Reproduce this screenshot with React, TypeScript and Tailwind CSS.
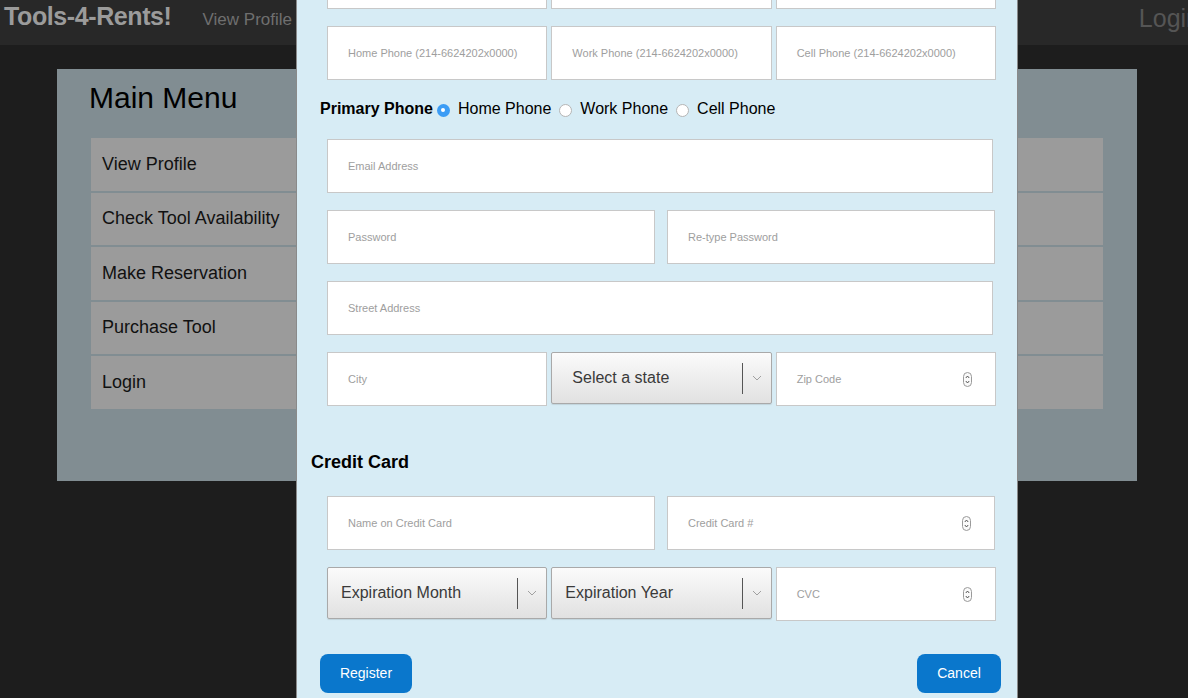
import React from "react";

const menuItems = [
  "View Profile",
  "Check Tool Availability",
  "Make Reservation",
  "Purchase Tool",
  "Login",
];

const Spinner = () => (
  <svg width="9" height="15" viewBox="0 0 9 15" className="shrink-0">
    <rect x="0.5" y="0.5" width="8" height="14" rx="4" fill="#fafafa" stroke="#9a9a9a" />
    <path d="M2.8 6 L4.5 4 L6.2 6" fill="none" stroke="#444" strokeWidth="0.9" />
    <path d="M2.8 9 L4.5 11 L6.2 9" fill="none" stroke="#444" strokeWidth="0.9" />
  </svg>
);

const Field = ({
  placeholder = "",
  number = false,
  className = "",
}: {
  placeholder?: string;
  number?: boolean;
  className?: string;
}) => (
  <div
    className={`flex h-[54px] items-center justify-between border border-[#c8c8c8] bg-white pl-5 pr-[23px] text-[11px] text-[#9e9e9e] ${className}`}
  >
    <span>{placeholder}</span>
    {number && <Spinner />}
  </div>
);

const SelectBox = ({ label, pad = "pl-[13px]" }: { label: string; pad?: string }) => (
  <div
    className={`flex h-[52px] items-center rounded-[2px] border border-[#a9a9a9] bg-gradient-to-b from-[#fbfbfb] to-[#e1e1e1] text-[16px] text-[#3a3a3a] shadow-[0_1px_1px_rgba(0,0,0,0.1)] ${pad}`}
  >
    <span className="flex-1">{label}</span>
    <div className="h-[31px] w-px bg-[#555]" />
    <svg width="28" height="10" viewBox="0 0 28 10">
      <path d="M10 3 L14 7 L18 3" fill="none" stroke="#a0a0a0" strokeWidth="1" />
    </svg>
  </div>
);

const Radio = ({ checked = false }: { checked?: boolean }) =>
  checked ? (
    <span className="flex h-[13px] w-[13px] items-center justify-center rounded-full bg-[#3b9cf5]">
      <span className="block h-[4px] w-[4px] rounded-full bg-white" />
    </span>
  ) : (
    <span className="block h-[13px] w-[13px] rounded-full border border-[#b5b5b5] bg-white" />
  );

const PrimaryButton = ({ label, className = "" }: { label: string; className?: string }) => (
  <button
    className={`h-[39px] rounded-[8px] bg-[#0a77cc] text-[14px] text-white ${className}`}
  >
    {label}
  </button>
);

export default function App() {
  return (
    <div
      className="relative h-[698px] w-[1188px] overflow-hidden bg-[#1d1d1d]"
      style={{ fontFamily: '"Liberation Sans", Arial, sans-serif' }}
    >
      {/* Nav bar */}
      <header className="flex h-[45px] items-start bg-[#282828] pl-[4px]">
        <span className="mt-[2px] text-[25px] font-bold leading-[29px] tracking-[-0.4px] text-[#9b9b9b]">
          Tools-4-Rents!
        </span>
        <span className="ml-[31px] mt-[10px] text-[17px] leading-[20px] text-[#6f6f6f]">View Profile</span>
        <span className="ml-auto mr-[-12px] mt-[4px] text-[25px] leading-[29px] text-[#555]">Login</span>
      </header>

      {/* Main menu panel */}
      <main className="ml-[57px] mt-[24px] h-[412px] w-[1080px] bg-[#818d92] px-[34px] pt-[12px]">
        <h1 className="ml-[-2px] text-[30px] leading-[34px] text-black">Main Menu</h1>
        <ul className="mt-[23px] flex flex-col gap-[2px]">
          {menuItems.map((item) => (
            <li
              key={item}
              className="flex h-[52.5px] items-center bg-[#9b9b9b] pl-[11px] text-[18px] text-[#111]"
            >
              {item}
            </li>
          ))}
        </ul>
      </main>

      {/* Register modal */}
      <div className="absolute left-[296px] top-0 h-[698px] w-[722px] border-x border-[#8a8a8a] bg-[#d7ecf5]">
        <div className="flex flex-col pl-[30px] pr-[21px]">
          <div className="mt-[-45px] grid grid-cols-3 gap-[4px]">
            <Field />
            <Field />
            <Field />
          </div>
          <div className="mt-[17px] grid grid-cols-3 gap-[4px]">
            <Field placeholder="Home Phone (214-6624202x0000)" />
            <Field placeholder="Work Phone (214-6624202x0000)" />
            <Field placeholder="Cell Phone (214-6624202x0000)" />
          </div>

          <div className="ml-[-7px] mt-[18px] flex h-[22px] items-center text-[16px] text-black">
            <span className="font-bold">Primary Phone</span>
            <span className="ml-[4px] mt-[2px]"><Radio checked /></span>
            <span className="ml-[8px]">Home Phone</span>
            <span className="ml-[8px] mt-[2px]"><Radio /></span>
            <span className="ml-[8px]">Work Phone</span>
            <span className="ml-[8px] mt-[2px]"><Radio /></span>
            <span className="ml-[8px]">Cell Phone</span>
          </div>

          <Field placeholder="Email Address" className="mr-[3px] mt-[19px]" />
          <div className="mr-[1px] mt-[17px] grid grid-cols-2 gap-[12px]">
            <Field placeholder="Password" />
            <Field placeholder="Re-type Password" />
          </div>
          <Field placeholder="Street Address" className="mr-[3px] mt-[17px]" />
          <div className="mt-[17px] grid grid-cols-3 items-start gap-[4px]">
            <Field placeholder="City" />
            <SelectBox label="Select a state" pad="pl-[20px]" />
            <Field placeholder="Zip Code" number />
          </div>

          <h2 className="ml-[-16px] mt-[45px] text-[18px] font-bold leading-[22px] text-black">Credit Card</h2>
          <div className="mr-[1px] mt-[23px] grid grid-cols-2 gap-[12px]">
            <Field placeholder="Name on Credit Card" />
            <Field placeholder="Credit Card #" number />
          </div>
          <div className="mt-[17px] grid grid-cols-3 items-start gap-[4px]">
            <SelectBox label="Expiration Month" />
            <SelectBox label="Expiration Year" />
            <Field placeholder="CVC" number />
          </div>

          <div className="ml-[-7px] mr-[-5px] mt-[33px] flex justify-between">
            <PrimaryButton label="Register" className="w-[92px]" />
            <PrimaryButton label="Cancel" className="w-[84px]" />
          </div>
        </div>
      </div>
    </div>
  );
}
